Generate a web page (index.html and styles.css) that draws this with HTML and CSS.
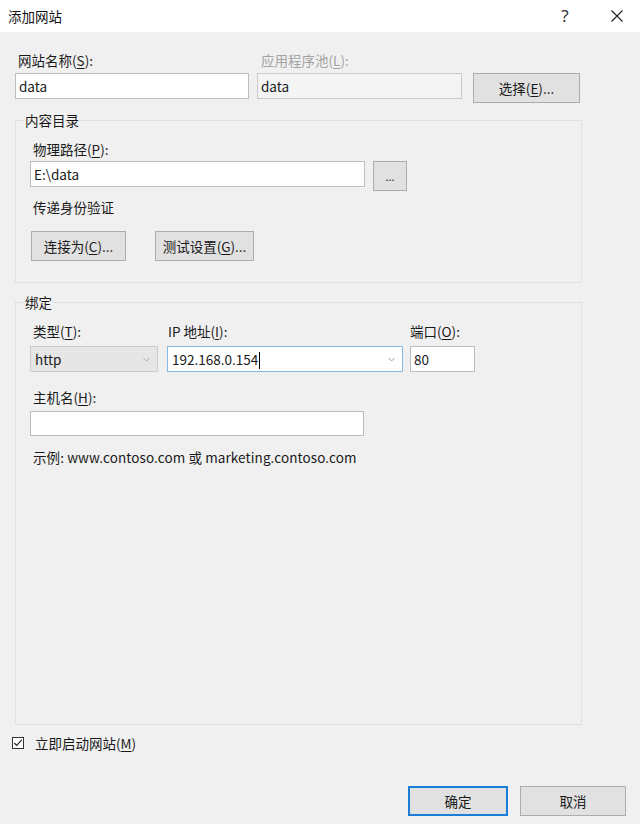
FILE: index.html
```html
<!DOCTYPE html>
<html lang="zh-CN">
<head>
<meta charset="utf-8">
<title>添加网站</title>
<link rel="stylesheet" href="styles.css">
</head>
<body>
<div class="dialog">
  <div class="titlebar">
    <span class="title">添加网站</span>
    <span class="help">?</span>
    <span class="close">
      <svg width="12" height="12" viewBox="0 0 12 12"><path d="M0.5 0.5 L11.5 11.5 M11.5 0.5 L0.5 11.5" stroke="#222" stroke-width="1.1" fill="none"/></svg>
    </span>
  </div>
  <div class="body">
    <div class="row-top">
      <div class="label lbl-name">网站名称(<u>S</u>):</div>
      <div class="label lbl-pool disabled">应用程序池(<u>L</u>):</div>
      <div></div>
      <div class="input">data</div>
      <div class="input readonly">data</div>
      <button class="btn btn-select">选择(<u>E</u>)...</button>
    </div>

    <fieldset class="group g-content">
      <legend>内容目录</legend>
      <div class="inner">
        <div class="label pad3">物理路径(<u>P</u>):</div>
        <div class="path-row">
          <div class="input path">E:\data</div>
          <button class="btn btn-browse">...</button>
        </div>
        <div class="label pad3 auth">传递身份验证</div>
        <div class="auth-row">
          <button class="btn btn-connect">连接为(<u>C</u>)...</button>
          <button class="btn btn-test">测试设置(<u>G</u>)...</button>
        </div>
      </div>
    </fieldset>

    <fieldset class="group g-binding">
      <legend>绑定</legend>
      <div class="inner">
        <div class="bind-row">
          <div class="col col-type">
            <div class="label pad3">类型(<u>T</u>):</div>
            <div class="select disabled-select"><span>http</span>
              <svg class="chev" width="7" height="5" viewBox="0 0 7 5"><path d="M0.5 1 L3.5 4 L6.5 1" stroke="#a8a8a8" stroke-width="1" fill="none"/></svg>
            </div>
          </div>
          <div class="col col-ip">
            <div class="label pad1">IP 地址(<u>I</u>):</div>
            <div class="select focused"><span>192.168.0.154<i class="caret"></i></span>
              <svg class="chev" width="7" height="5" viewBox="0 0 7 5"><path d="M0.5 1 L3.5 4 L6.5 1" stroke="#a0a0a0" stroke-width="1" fill="none"/></svg>
            </div>
          </div>
          <div class="col col-port">
            <div class="label">端口(<u>O</u>):</div>
            <div class="input port">80</div>
          </div>
        </div>
        <div class="label pad3 host-label">主机名(<u>H</u>):</div>
        <div class="input host"></div>
        <div class="label pad3 example">示例: www.contoso.com 或 marketing.contoso.com</div>
      </div>
    </fieldset>

    <div class="check-row">
      <span class="checkbox">
        <svg width="12" height="12" viewBox="0 0 12 12"><rect x="0.5" y="0.5" width="11" height="11" fill="#fff" stroke="#333"/><path d="M2.3 6 L4.7 8.4 L9.8 2.8" stroke="#222" stroke-width="1.1" fill="none"/></svg>
      </span>
      <span class="check-label">立即启动网站(<u>M</u>)</span>
    </div>

    <div class="actions">
      <button class="btn btn-ok">确定</button>
      <button class="btn btn-cancel">取消</button>
    </div>
  </div>
</div>
</body>
</html>
```

FILE: styles.css
```css
* { box-sizing: border-box; }
html, body { margin: 0; padding: 0; }
body {
  width: 640px;
  height: 824px;
  overflow: hidden;
  background: #f0f0f0;
  font-family: "Noto Sans CJK SC", "Noto Sans", sans-serif;
  font-size: 13.5px;
  color: #1a1a1a;
}
u { text-decoration: underline; text-underline-offset: 2px; text-decoration-thickness: 1px; }

.dialog { display: flex; flex-direction: column; height: 824px; }

.titlebar {
  flex: none;
  height: 32px;
  background: #fff;
  display: flex;
  align-items: center;
  padding-left: 8px;
  padding-right: 11px;
}
.title { flex: 1; line-height: 18px; color: #111; }
.help {
  width: 20px;
  text-align: center;
  font-family: "Noto Sans", sans-serif;
  font-size: 17px;
  line-height: 20px;
  color: #333;
}
.close {
  width: 24px;
  margin-left: 30px;
  display: flex;
  justify-content: center;
  align-items: center;
}

.body {
  flex: 1;
  display: flex;
  flex-direction: column;
  padding: 19px 14px 8px 15px;
}

.label { height: 18px; line-height: 18px; white-space: nowrap; }
.label.disabled { color: #a3a3a3; }
.pad3 { padding-left: 3px; }
.pad1 { padding-left: 1px; }

.input {
  height: 26px;
  line-height: 24px;
  background: #fff;
  border: 1px solid #bdbdbd;
  padding: 0 3px;
  white-space: nowrap;
}
.input.readonly { background: #f4f4f4; border-color: #c9c9c9; }

.btn {
  font-family: inherit;
  font-size: 13.5px;
  color: #1a1a1a;
  background: #e1e1e1;
  border: 1px solid #adadad;
  height: 30px;
  padding: 0;
  margin: 0;
}

.row-top {
  display: grid;
  grid-template-columns: 234px 205px 107px;
  column-gap: 8px;
  row-gap: 4px;
  align-items: start;
}
.lbl-name { padding-left: 3px; }
.lbl-pool { padding-left: 4px; }
.btn-select { margin-left: 3px; width: 107px; }

.group {
  margin: 0;
  padding: 0;
  width: 567px;
  border: 1px solid #e0e0e0;
  min-inline-size: 0;
}
.group legend {
  margin-left: 8px;
  padding: 0 1px;
  line-height: 18px;
  height: 18px;
}
.g-content { margin-top: 8px; }
.g-content .inner { padding: 11px 0 21px 14px; }
.path-row { display: flex; align-items: flex-start; margin-top: 3px; }
.input.path { width: 335px; }
.btn-browse { width: 34px; margin-left: 8px; font-size: 11px; }
.auth { margin-top: 7px; }
.auth-row { display: flex; margin-top: 15px; }
.btn-connect { width: 95px; margin-left: 1px; }
.btn-test { width: 99px; margin-left: 29px; }

.g-binding { margin-top: 10px; flex: 1; }
.g-binding .inner { padding: 11px 0 0 14px; }
.bind-row { display: flex; align-items: flex-start; }
.col .label { margin-bottom: 6px; }
.col-type { width: 128px; }
.col-ip { width: 236px; margin-left: 9px; }
.col-port { width: 65px; margin-left: 7px; }

.select {
  height: 26px;
  display: flex;
  align-items: center;
  justify-content: space-between;
  padding: 0 7px 0 4px;
  border: 1px solid #cccccc;
}
.disabled-select { background: #e6e6e6; }
.select.focused { background: #fff; border-color: #86b9e6; }
.caret {
  display: inline-block;
  width: 1px;
  height: 17px;
  background: #000;
  vertical-align: -4px;
  margin-left: 1px;
}
.chev { flex: none; }
.input.port { width: 65px; }

.host-label { margin-top: 16px; }
.input.host { width: 334px; height: 25px; margin-top: 5px; }
.example { margin-top: 12px; letter-spacing: 0.1px; }

.check-row {
  margin-top: 9px;
  height: 18px;
  display: flex;
  align-items: center;
}
.checkbox { width: 12px; height: 12px; margin-left: -3px; display: flex; }
.check-label { margin-left: 11px; line-height: 18px; }

.actions {
  margin-top: 34px;
  display: flex;
  justify-content: flex-end;
  gap: 12px;
}
.btn-ok { width: 100px; border: 2px solid #1a7ed6; }
.btn-cancel { width: 106px; }
```
